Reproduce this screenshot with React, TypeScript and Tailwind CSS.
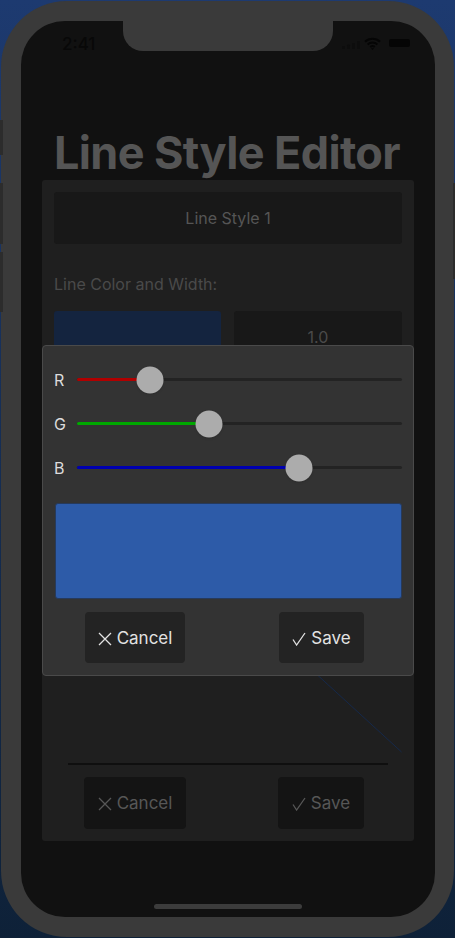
const font = "font-['Inter',sans-serif]";

const sliders = [
  { label: 'R', color: 'bg-[#b00000]', value: 22.5 },
  { label: 'G', color: 'bg-[#00a800]', value: 40.6 },
  { label: 'B', color: 'bg-[#0000b0]', value: 68.3 },
];

function CrossIcon() {
  return (
    <svg width="14" height="14" viewBox="0 0 14 14" fill="none" stroke="currentColor" strokeWidth="1.3">
      <path d="M1 1l12 12M13 1L1 13" />
    </svg>
  );
}

function CheckIcon() {
  return (
    <svg width="14" height="14" viewBox="0 0 14 14" fill="none" stroke="currentColor" strokeWidth="1.3">
      <path d="M1 7.5l3.6 5.5L13 1" />
    </svg>
  );
}

function ActionButton({ kind, className }: { kind: 'cancel' | 'save'; className: string }) {
  return (
    <div className={`flex items-center justify-center gap-[5px] rounded-[4px] pt-[2px] text-[17px] ${className}`}>
      {kind === 'cancel' ? <CrossIcon /> : <CheckIcon />}
      <span>{kind === 'cancel' ? 'Cancel' : 'Save'}</span>
    </div>
  );
}

function SliderRow({ label, color, value }: { label: string; color: string; value: number }) {
  return (
    <div className="flex h-[44px] items-center pb-px">
      <div className="w-[23px] text-base text-[#dcdcdc]">{label}</div>
      <div className="relative h-[3px] flex-1 rounded-full bg-[#232323]">
        <div className={`h-full rounded-full ${color}`} style={{ width: `${value}%` }} />
        <div
          className="absolute top-1/2 h-[27px] w-[27px] -translate-x-1/2 -translate-y-1/2 rounded-full bg-[#acacac] shadow-sm"
          style={{ left: `${value}%` }}
        />
      </div>
    </div>
  );
}

export default function App() {
  return (
    <div className={`relative h-[938px] w-[455px] overflow-hidden bg-gradient-to-b from-[#1d3a70] to-[#0e2138] ${font}`}>
      {/* side buttons */}
      <div className="absolute left-0 top-[120px] z-20 h-[35px] w-[3px] bg-[#2c2c2c]" />
      <div className="absolute left-0 top-[183px] z-20 h-[61px] w-[3px] bg-[#2c2c2c]" />
      <div className="absolute left-0 top-[252px] z-20 h-[60px] w-[3px] bg-[#2c2c2c]" />
      <div className="absolute right-0 top-[183px] z-20 h-[96px] w-[2px] bg-[#2c2c2c]" />

      <div className="relative z-10 mx-px mt-px h-[936px] rounded-[66px] bg-[#3a3a3a] pl-5 pr-[19px] pt-5">
        <div className="relative h-[896px] overflow-hidden rounded-[44px] bg-[#111111] px-[21px]">
          {/* notch */}
          <div className="absolute left-[102px] top-0 h-[30px] w-[210px] rounded-b-[20px] bg-[#3a3a3a]" />

          {/* status bar */}
          <div className="absolute left-[41px] top-[11px] text-[17px] font-medium text-[#080808]">2:41</div>
          <svg className="absolute left-[321px] top-[20px]" width="18" height="8" viewBox="0 0 18 8" fill="#0d0d0d">
            <rect x="0" y="5" width="3" height="3" rx="1" />
            <rect x="5" y="3.5" width="3" height="4.5" rx="1" />
            <rect x="10" y="2" width="3" height="6" rx="1" />
            <rect x="15" y="0" width="3" height="8" rx="1" />
          </svg>
          <svg className="absolute left-[343px] top-[16px]" width="17" height="13" viewBox="0 0 17 13" fill="none" stroke="#050505" strokeWidth="2">
            <path d="M1 4.8c4.2-4 10.8-4 15 0M3.6 7.5c2.8-2.6 7-2.6 9.8 0M6.2 10c1.3-1.1 3.3-1.1 4.6 0" />
            <path d="M8.5 13l-1.6-1.8h3.2z" fill="#050505" stroke="none" />
          </svg>
          <div className="absolute left-[368px] top-[18px] h-[8px] w-[21px] rounded-[2px] bg-[#050505]" />

          <h1 className="mt-[104px] h-[55px] pr-[2px] text-center text-[45px] font-bold leading-[55px] tracking-[-0.63px] text-[#555555]">
            Line Style Editor
          </h1>

          <div className="flex h-[661px] flex-col rounded-[3px] bg-[#1f1f1f] p-3">
            <div className="flex h-[52px] items-center justify-center rounded-[3px] bg-[#181818] text-base text-[#555555]">
              Line Style 1
            </div>
            <div className="mt-7 text-base text-[#4a4a4a]">Line Color and Width:</div>
            <div className="mt-[15px] flex h-[52px] gap-[13px]">
              <div className="w-[167px] rounded-[3px] bg-[#14243f]" />
              <div className="flex flex-1 items-center justify-center rounded-[3px] bg-[#181818] text-base text-[#4a4a4a]">
                1.0
              </div>
            </div>
            <div className="min-h-0 flex-1">
              <svg className="h-full w-full" viewBox="0 0 348 401" fill="none">
                <path d="M230 282L348 390" stroke="#16294a" strokeWidth="1" />
              </svg>
            </div>
            <div className="mx-[14px] h-[2px] bg-[#0f0f0f]" />
            <div className="mt-3 flex justify-between pl-[30px] pr-[38px]">
              <ActionButton kind="cancel" className="h-[52px] w-[102px] bg-[#141414] text-[#575757]" />
              <ActionButton kind="save" className="h-[52px] w-[86px] bg-[#141414] text-[#575757]" />
            </div>
          </div>

          {/* home indicator */}
          <div className="absolute left-[133px] top-[883px] h-[5px] w-[148px] rounded-full bg-[#3c3c3c]" />
        </div>
      </div>

      {/* colour picker modal */}
      <div className="absolute left-[42px] top-[345px] z-20 h-[331px] w-[372px] rounded-[4px] border border-[#4a4a4a] bg-[#333333] px-[11px] pt-3">
        {sliders.map((s) => (
          <SliderRow key={s.label} {...s} />
        ))}
        <div className="ml-px mt-[13px] h-[96px] rounded-[3px] border border-[#263a5c] bg-[#2d5ba8]" />
        <div className="mt-[13px] flex justify-between pl-[31px] pr-[38px]">
          <ActionButton kind="cancel" className="h-[51px] w-[100px] bg-[#232323] text-[#e2e2e2]" />
          <ActionButton kind="save" className="h-[51px] w-[85px] bg-[#232323] text-[#e2e2e2]" />
        </div>
      </div>
    </div>
  );
}
